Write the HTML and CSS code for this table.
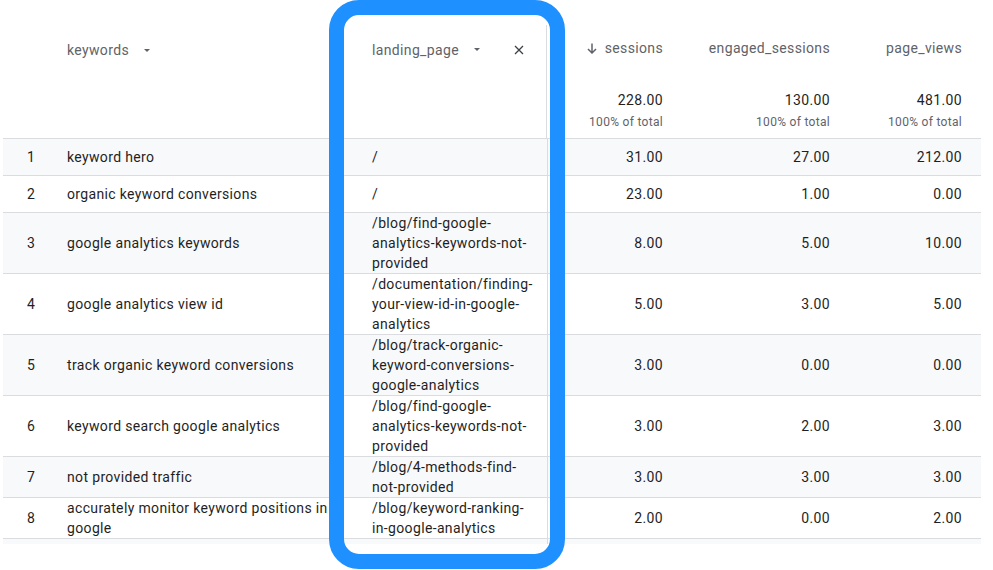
FILE: index.html
```html
<!DOCTYPE html>
<html>
<head>
<meta charset="utf-8">
<link rel="stylesheet" href="styles.css">
</head>
<body>
<div class="wrap">
  <table class="report">
    <colgroup>
      <col class="c-num"><col class="c-kw"><col class="c-lp"><col class="c-s"><col class="c-e"><col class="c-p">
    </colgroup>
    <thead>
      <tr class="head-row">
        <th class="h-num"></th>
        <th class="h-dim"><span class="hlabel">keywords</span><svg class="caret" width="6" height="3" viewBox="0 0 6 3"><path d="M0 0H6L3 3Z" fill="#5f6368"/></svg></th>
        <th class="h-dim h-lp"><div class="lp-inner"><span class="hlabel">landing_page</span><svg class="caret" width="6" height="3" viewBox="0 0 6 3"><path d="M0 0H6L3 3Z" fill="#5f6368"/></svg><svg class="close" width="10" height="10" viewBox="0 0 10 10"><path d="M1 1L9 9M9 1L1 9" stroke="#3c4043" stroke-width="1.3"/></svg></div></th>
        <th class="h-met"><div class="mlabel"><svg class="down" width="10" height="11" viewBox="0 0 10 11"><path d="M5 0.5V10M1 6L5 10L9 6" stroke="#5f6368" stroke-width="1.5" fill="none"/></svg>sessions</div><div class="total">228.00</div><div class="pct">100% of total</div></th>
        <th class="h-met"><div class="mlabel">engaged_sessions</div><div class="total">130.00</div><div class="pct">100% of total</div></th>
        <th class="h-met h-last"><div class="mlabel">page_views</div><div class="total">481.00</div><div class="pct">100% of total</div></th>
      </tr>
    </thead>
    <tbody>
      <tr class="odd"><td class="num">1</td><td class="kw">keyword hero</td><td class="lp">/</td><td class="m">31.00</td><td class="m">27.00</td><td class="m last">212.00</td></tr>
      <tr><td class="num">2</td><td class="kw">organic keyword conversions</td><td class="lp">/</td><td class="m">23.00</td><td class="m">1.00</td><td class="m last">0.00</td></tr>
      <tr class="odd"><td class="num">3</td><td class="kw">google analytics keywords</td><td class="lp">/blog/find-google-<br>analytics-keywords-not-<br>provided</td><td class="m">8.00</td><td class="m">5.00</td><td class="m last">10.00</td></tr>
      <tr><td class="num">4</td><td class="kw">google analytics view id</td><td class="lp">/documentation/finding-<br>your-view-id-in-google-<br>analytics</td><td class="m">5.00</td><td class="m">3.00</td><td class="m last">5.00</td></tr>
      <tr class="odd"><td class="num">5</td><td class="kw">track organic keyword conversions</td><td class="lp">/blog/track-organic-<br>keyword-conversions-<br>google-analytics</td><td class="m">3.00</td><td class="m">0.00</td><td class="m last">0.00</td></tr>
      <tr><td class="num">6</td><td class="kw">keyword search google analytics</td><td class="lp">/blog/find-google-<br>analytics-keywords-not-<br>provided</td><td class="m">3.00</td><td class="m">2.00</td><td class="m last">3.00</td></tr>
      <tr class="odd"><td class="num">7</td><td class="kw">not provided traffic</td><td class="lp">/blog/4-methods-find-<br>not-provided</td><td class="m">3.00</td><td class="m">3.00</td><td class="m last">3.00</td></tr>
      <tr><td class="num">8</td><td class="kw">accurately monitor keyword positions in<br>google</td><td class="lp">/blog/keyword-ranking-<br>in-google-analytics</td><td class="m">2.00</td><td class="m">0.00</td><td class="m last">2.00</td></tr>
      <tr class="strip"><td></td><td></td><td class="lp"></td><td></td><td></td><td></td></tr>
    </tbody>
  </table>
  <div class="highlight"></div>
</div>
</body>
</html>
```

FILE: styles.css
```css
* { box-sizing: border-box; }
html, body { margin: 0; padding: 0; background: #fff; }
body {
  font-family: Roboto, "Liberation Sans", Arial, sans-serif;
  font-size: 14px;
  letter-spacing: 0.35px;
  color: #1f1f1f;
}
.wrap {
  position: relative;
  width: 993px;
  height: 570px;
  padding: 0 12px 0 3px;
}
.report {
  border-collapse: collapse;
  table-layout: fixed;
  width: 978px;
}
.c-num { width: 49px; }
.c-kw { width: 308px; }
.c-lp { width: 187px; }
.c-s { width: 128px; }
.c-e { width: 167px; }
.c-p { width: 139px; }

.head-row { height: 138px; }
th {
  font-weight: 400;
  vertical-align: top;
  padding: 0;
  border-bottom: 1px solid #dadce0;
}
.hlabel { color: #5f6368; line-height: 20px; }
.h-dim {
  text-align: left;
  padding: 40px 0 0 15px;
}
.h-dim .caret { margin-left: 15px; vertical-align: middle; position: relative; top: -1px; }
.h-lp {
  padding: 25px 0 0 0;
}
.lp-inner {
  height: 113px;
  border-right: 1px solid #dadce0;
  padding: 15px 0 0 12px;
  display: flex;
  align-items: flex-start;
}
.lp-inner .hlabel { display: block; }
.lp-inner .caret { margin: 9px 0 0 15px; }
.lp-inner .close { margin: 5px 0 0 34px; }
.h-met {
  text-align: right;
  padding: 38px 12px 0 0;
}
.h-last { padding-right: 19px; }
.mlabel {
  color: #5f6368;
  line-height: 20px;
  display: flex;
  justify-content: flex-end;
  align-items: center;
}
.down { margin-right: 8px; }
.total { margin-top: 32px; line-height: 20px; color: #1f1f1f; }
.pct { margin-top: 4px; font-size: 12px; line-height: 16px; letter-spacing: 0.3px; color: #5f6368; }

td {
  padding: 0;
  height: 37px;
  line-height: 20px;
  vertical-align: middle;
  border-bottom: 1px solid #dadce0;
}
tr.odd td { background: #f8f9fa; }
.num { padding-left: 24px; }
.kw { padding-left: 15px; padding-right: 8px; }
.lp { padding-left: 12px; border-right: 1px solid #dadce0; }
.m { text-align: right; padding-right: 12px; }
.m.last { padding-right: 19px; }
tr.strip td { height: 5px; background: #f8f9fa; border-bottom: none; }

.highlight {
  position: absolute;
  left: 329px;
  top: 0;
  width: 236px;
  height: 569px;
  border: 15px solid #1e90ff;
  border-radius: 30px;
  pointer-events: none;
}
```
